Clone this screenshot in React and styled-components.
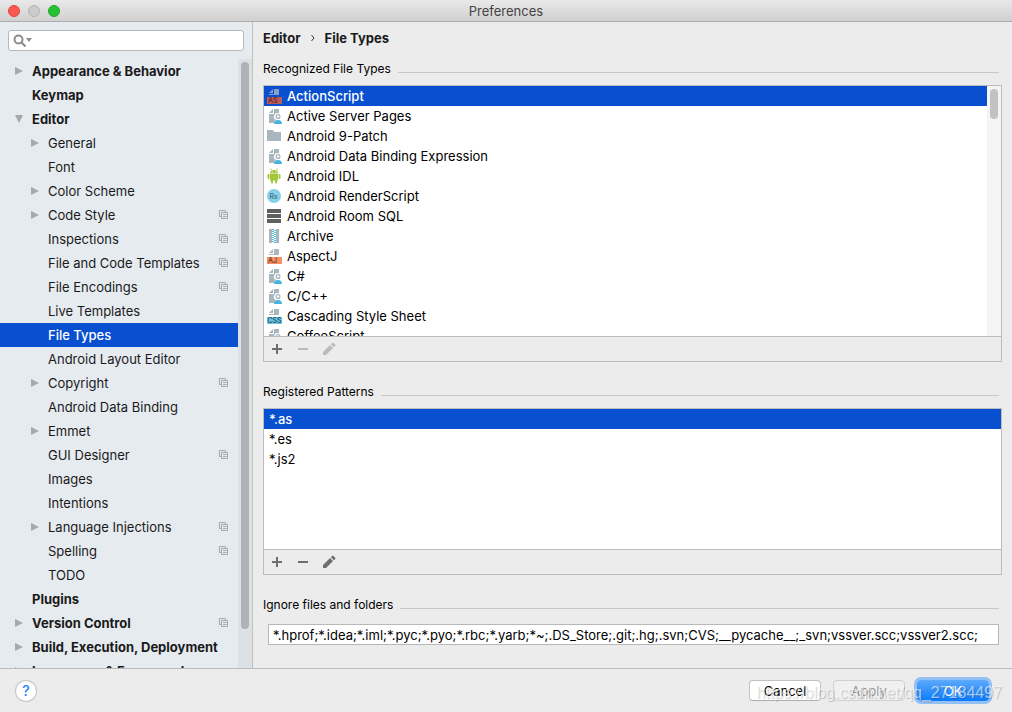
import React, { useState } from "react";
import styled, { createGlobalStyle, css } from "styled-components";

const TREE = [
  { label: "Appearance & Behavior", level: 0, arrow: "closed" },
  { label: "Keymap", level: 0 },
  { label: "Editor", level: 0, arrow: "open" },
  { label: "General", level: 1, arrow: "closed" },
  { label: "Font", level: 1 },
  { label: "Color Scheme", level: 1, arrow: "closed" },
  { label: "Code Style", level: 1, arrow: "closed", project: true },
  { label: "Inspections", level: 1, project: true },
  { label: "File and Code Templates", level: 1, project: true },
  { label: "File Encodings", level: 1, project: true },
  { label: "Live Templates", level: 1 },
  { label: "File Types", level: 1 },
  { label: "Android Layout Editor", level: 1 },
  { label: "Copyright", level: 1, arrow: "closed", project: true },
  { label: "Android Data Binding", level: 1 },
  { label: "Emmet", level: 1, arrow: "closed" },
  { label: "GUI Designer", level: 1, project: true },
  { label: "Images", level: 1 },
  { label: "Intentions", level: 1 },
  { label: "Language Injections", level: 1, arrow: "closed", project: true },
  { label: "Spelling", level: 1, project: true },
  { label: "TODO", level: 1 },
  { label: "Plugins", level: 0 },
  { label: "Version Control", level: 0, arrow: "closed", project: true },
  { label: "Build, Execution, Deployment", level: 0, arrow: "closed" },
  { label: "Languages & Frameworks", level: 0, arrow: "closed" },
];

const FILE_TYPES = [
  { label: "ActionScript", icon: "as" },
  { label: "Active Server Pages", icon: "user" },
  { label: "Android 9-Patch", icon: "folder" },
  { label: "Android Data Binding Expression", icon: "user" },
  { label: "Android IDL", icon: "android" },
  { label: "Android RenderScript", icon: "rs" },
  { label: "Android Room SQL", icon: "sql" },
  { label: "Archive", icon: "archive" },
  { label: "AspectJ", icon: "aj" },
  { label: "C#", icon: "user" },
  { label: "C/C++", icon: "user" },
  { label: "Cascading Style Sheet", icon: "css" },
  { label: "CoffeeScript", icon: "user" },
];

const PATTERNS = ["*.as", "*.es", "*.js2"];

const BADGES = {
  as: { text: "AS", fill: "#b85c56", color: "#5c2330", page: "#86a0cc" },
  aj: { text: "AJ", fill: "#f68f64", color: "#6b3420", page: "#aab6bd" },
  css: { text: "CSS", fill: "#6cc6e6", color: "#1f4a5c", page: "#aab6bd" },
};

const FileIcon = ({ type }) => {
  const badge = BADGES[type];
  return (
    <Icon viewBox="0 0 16 16" aria-hidden="true">
      {badge && (
        <>
          <path d="M7 1 3 5h4zM8 1v5H3v1h10V1z" fill={badge.page} />
          <path d="M1 9h15v7H1z" fill={badge.fill} />
          <BadgeText x={badge.text.length > 2 ? 1.4 : 2} y="15" fill={badge.color}>
            {badge.text}
          </BadgeText>
        </>
      )}
      {type === "user" && (
        <>
          <path d="M7 1 3 5h4zM8 1v5H3v9h5.500c.2-1.400.8-2.300 1.700-2.900A3.300 3.300 0 0 1 13 5.300V1z" fill="#aab6bd" />
          <circle cx="12" cy="8.500" r="1.900" fill="#fff" stroke="#aab6bd" strokeWidth="1.300" />
          <path d="M8 16c0-2.600 1.600-4 4-4s4 1.400 4 4z" fill="#44b4dd" />
        </>
      )}
      {type === "folder" && <path d="M1 2h6l1.500 2H15v9H1z" fill="#aab6bd" />}
      {type === "android" && (
        <g fill="#a4c639">
          <path d="M4 5.500C4 3.500 5.500 2 8 2s4 1.500 4 3.500z" />
          <path d="M4.600.6 6 2.600M11.400.6 10 2.600" stroke="#a4c639" />
          <path d="M4 6h8v6.500H4z" />
          <rect x="1.500" y="6" width="2" height="5" rx="1" />
          <rect x="12.500" y="6" width="2" height="5" rx="1" />
          <rect x="5" y="11" width="2" height="4.500" rx="1" />
          <rect x="9" y="11" width="2" height="4.500" rx="1" />
          <path d="M5.700 3.500h1v1h-1zM9.300 3.500h1v1h-1z" fill="#fff" />
        </g>
      )}
      {type === "rs" && (
        <>
          <circle cx="8" cy="8" r="7" fill="#86d1e8" />
          <BadgeText x="3.500" y="11" fill="#3c6f80">
            Rs
          </BadgeText>
        </>
      )}
      {type === "sql" && <path d="M1 1h14v4H1zM1 6h14v4H1zM1 11h14v4H1z" fill="#5f5f5f" />}
      {type === "archive" && (
        <>
          <path d="M3 1h3v14H3zM10 1h3v14h-3z" fill="#aab6bd" />
          <path d="M7 1v14" stroke="#53b9df" strokeWidth="2" strokeDasharray="1 1" />
          <path d="M9 2v13" stroke="#53b9df" strokeWidth="2" strokeDasharray="1 1" />
        </>
      )}
    </Icon>
  );
};

const ProjectIcon = () => (
  <SmallIcon viewBox="0 0 10 10" aria-label="Project level setting">
    <path d="M2.500 6.500h-2v-6h6v2" fill="none" stroke="#9fabb3" />
    <path d="M2.500 2.500h6v6h-6zM4 4.500h3.500M4 6.500h3.500" fill="none" stroke="#9fabb3" />
  </SmallIcon>
);

const Toolbar = ({ name, locked }) => (
  <ToolbarRow>
    <ToolButton aria-label={`Add ${name}`}>
      <Icon viewBox="0 0 16 16">
        <path d="M7 3h2v4h4v2H9v4H7V9H3V7h4z" />
      </Icon>
    </ToolButton>
    <ToolButton aria-label={`Remove ${name}`} disabled={locked}>
      <Icon viewBox="0 0 16 16">
        <path d="M3 7h10v2H3z" />
      </Icon>
    </ToolButton>
    <ToolButton aria-label={`Edit ${name}`} disabled={locked}>
      <Icon viewBox="0 0 16 16">
        <path d="M2 11v3h3l7-7-3-3zM9.900 3.200l3 3 1.300-1.300a.8.8 0 0 0 0-1.200l-1.800-1.800a.8.8 0 0 0-1.200 0z" />
      </Icon>
    </ToolButton>
  </ToolbarRow>
);

const App = () => {
  const [page, setPage] = useState("File Types");
  const [fileType, setFileType] = useState("ActionScript");
  const [pattern, setPattern] = useState("*.as");
  const [query, setQuery] = useState("");
  const [ignored, setIgnored] = useState(
    "*.hprof;*.idea;*.iml;*.pyc;*.pyo;*.rbc;*.yarb;*~;.DS_Store;.git;.hg;.svn;CVS;__pycache__;_svn;vssver.scc;vssver2.scc;"
  );

  return (
    <Window>
      <GlobalStyle />
      <TitleBar>
        <Lights>
          <Light $fill="#fc5650" $edge="#e2453f" />
          <Light $fill="#cbcbcb" $edge="#b4b4b4" />
          <Light $fill="#28c132" $edge="#1ea929" />
        </Lights>
        <Title>Preferences</Title>
      </TitleBar>

      <Body>
        <Sidebar>
          <SearchBox>
            <SearchIcon viewBox="0 0 20 14" aria-hidden="true">
              <circle cx="5.500" cy="5.500" r="4" fill="none" stroke="#8c8c8c" strokeWidth="2" />
              <path d="m8.500 8.500 4 4" stroke="#8c8c8c" strokeWidth="2.200" />
              <path d="M13 4h6l-3 4z" fill="#8c8c8c" />
            </SearchIcon>
            <SearchInput
              aria-label="Search settings"
              value={query}
              onChange={(e) => setQuery(e.target.value)}
            />
          </SearchBox>
          <TreeArea>
            <Tree>
              {TREE.map((item) => (
                <li key={item.label}>
                  <TreeItem
                    $level={item.level}
                    $selected={item.label === page}
                    onClick={() => setPage(item.label)}
                  >
                    <Arrow viewBox="0 0 8 8" aria-hidden="true">
                      {item.arrow === "closed" && <path d="M0 0v8l8-4z" />}
                      {item.arrow === "open" && <path d="M0 0h8L4 8z" />}
                    </Arrow>
                    <TreeLabel>{item.label}</TreeLabel>
                    {item.project && <ProjectIcon />}
                  </TreeItem>
                </li>
              ))}
            </Tree>
            <TreeScroll>
              <TreeThumb />
            </TreeScroll>
          </TreeArea>
        </Sidebar>

        <Content>
          <Breadcrumb>
            <span>Editor</span>
            <Chevron viewBox="0 0 6 8" aria-hidden="true">
              <path d="m1.500 1 2.500 3-2.500 3" />
            </Chevron>
            <span>File Types</span>
          </Breadcrumb>

          <SectionTitle>
            Recognized File Types
            <Rule />
          </SectionTitle>
          <Panel $grow>
            <ListArea>
              <List>
                {FILE_TYPES.map((item) => (
                  <li key={item.label}>
                    <ListItem
                      $selected={item.label === fileType}
                      onClick={() => setFileType(item.label)}
                    >
                      <FileIcon type={item.icon} />
                      {item.label}
                    </ListItem>
                  </li>
                ))}
              </List>
              <ListScroll>
                <ListThumb />
              </ListScroll>
            </ListArea>
            <Toolbar name="file type" locked />
          </Panel>

          <SectionTitle>
            Registered Patterns
            <Rule />
          </SectionTitle>
          <Panel>
            <PatternList>
              {PATTERNS.map((item) => (
                <li key={item}>
                  <ListItem
                    $plain
                    $selected={item === pattern}
                    onClick={() => setPattern(item)}
                  >
                    {item}
                  </ListItem>
                </li>
              ))}
            </PatternList>
            <Toolbar name="pattern" />
          </Panel>

          <SectionTitle as="label" htmlFor="ignored">
            Ignore files and folders
            <Rule />
          </SectionTitle>
          <IgnoreInput
            id="ignored"
            value={ignored}
            onChange={(e) => setIgnored(e.target.value)}
          />
        </Content>
      </Body>

      <Footer>
        <HelpButton aria-label="Help">?</HelpButton>
        <Buttons>
          <Button>Cancel</Button>
          <Button disabled>Apply</Button>
          <PrimaryButton>OK</PrimaryButton>
        </Buttons>
        <Watermark>https://blog.csdn.net/qq_27184497</Watermark>
      </Footer>
    </Window>
  );
};

export default App;

// Styled components
const GlobalStyle = createGlobalStyle`
  * {
    box-sizing: border-box;
  }
  body {
    margin: 0;
    background: #ececec;
    color: #000;
    font-family: Inter, "Liberation Sans", sans-serif;
    font-size: 13px;
  }
  button, input {
    font: inherit;
    color: inherit;
  }
  ul {
    list-style: none;
    margin: 0;
    padding: 0;
  }
`;

const Window = styled.div`
  display: flex;
  flex-direction: column;
  height: 100vh;
  background: #ececec;
`;

const TitleBar = styled.header`
  display: grid;
  grid-template-columns: 1fr auto 1fr;
  align-items: center;
  flex-shrink: 0;
  height: 22px;
  padding: 0 8px;
  background: linear-gradient(#e9e9e9, #d0d0d0);
  border-bottom: 1px solid #aeaeae;
`;

const Lights = styled.div`
  display: flex;
  gap: 8px;
`;

const Light = styled.span`
  width: 12px;
  height: 12px;
  border-radius: 50%;
  background: ${(p) => p.$fill};
  border: 1px solid ${(p) => p.$edge};
`;

const Title = styled.h1`
  margin: 0;
  font-size: 13px;
  font-weight: 400;
  color: #444;
`;

const Body = styled.div`
  display: flex;
  flex: 1;
  min-height: 0;
`;

const Sidebar = styled.nav`
  display: flex;
  flex-direction: column;
  flex-shrink: 0;
  width: 253px;
  background: #e6ebf0;
  border-right: 1px solid #bfc1c4;
`;

const SearchBox = styled.div`
  display: flex;
  align-items: center;
  flex-shrink: 0;
  height: 21px;
  margin: 8px;
  padding: 0 4px;
  background: #fff;
  border: 1px solid #b5b8bb;
  border-radius: 3px;
`;

const SearchIcon = styled.svg`
  width: 20px;
  height: 14px;
`;

const SearchInput = styled.input`
  flex: 1;
  min-width: 0;
  padding: 0;
  border: 0;
  outline: 0;
  background: none;
`;

const TreeArea = styled.div`
  display: flex;
  flex: 1;
  min-height: 0;
`;

const Tree = styled.ul`
  flex: 1;
  min-width: 0;
  overflow: hidden;
`;

const TreeItem = styled.button`
  display: flex;
  align-items: center;
  gap: 9px;
  width: 100%;
  height: 24px;
  padding: 0 9px 1px ${(p) => (p.$level ? 31 : 15)}px;
  border: 0;
  text-align: left;
  background: none;
  color: #1a1a1a;
  font-weight: ${(p) => (p.$level ? 400 : 700)};
  ${(p) =>
    p.$selected &&
    css`
      background: #0850d0;
      color: #fff;
      font-weight: 500;
    `}
`;

const Arrow = styled.svg`
  flex-shrink: 0;
  width: 8px;
  height: 8px;
  fill: #a8a8a8;
`;

const TreeLabel = styled.span`
  flex: 1;
  white-space: nowrap;
`;

const SmallIcon = styled.svg`
  flex-shrink: 0;
  width: 10px;
  height: 10px;
`;

const TreeScroll = styled.div`
  width: 14px;
  padding: 3px;
  background: #dce1e6;
`;

const TreeThumb = styled.div`
  width: 8px;
  height: 94%;
  border-radius: 4px;
  background: #afb2b7;
`;

const Content = styled.main`
  display: flex;
  flex-direction: column;
  flex: 1;
  min-width: 0;
  padding: 8px 10px 23px;
`;

const Breadcrumb = styled.div`
  display: flex;
  align-items: center;
  gap: 9px;
  height: 16px;
  font-weight: 700;
  color: #1a1a1a;
`;

const Chevron = styled.svg`
  width: 6px;
  height: 8px;
  fill: none;
  stroke: #333;
`;

const SectionTitle = styled.h2`
  display: flex;
  align-items: baseline;
  gap: 7px;
  flex-shrink: 0;
  margin: 22px 3px 8px 0;
  font-size: 12px;
  font-weight: 400;
  line-height: 16px;

  ${Breadcrumb} + & {
    margin-top: 15px;
  }
`;

const Rule = styled.span`
  flex: 1;
  height: 1px;
  background: #c8c8c8;
`;

const Panel = styled.div`
  display: flex;
  flex-direction: column;
  flex: ${(p) => (p.$grow ? 1 : "none")};
  min-height: 0;
  border: 1px solid #bcbcbc;
  background: #fff;
`;

const ListArea = styled.div`
  display: flex;
  flex: 1;
  min-height: 0;
`;

const List = styled.ul`
  flex: 1;
  overflow: hidden;
`;

const PatternList = styled.ul`
  height: 140px;
  overflow: hidden;
`;

const ListItem = styled.button`
  display: flex;
  align-items: center;
  gap: 5px;
  width: 100%;
  height: 20px;
  padding: 0 ${(p) => (p.$plain ? 5 : 2)}px;
  border: 0;
  text-align: left;
  background: ${(p) => (p.$selected ? "#0850d0" : "none")};
  color: ${(p) => (p.$selected ? "#fff" : "#000")};
  font-weight: ${(p) => (p.$selected ? 500 : 400)};
`;

const ListScroll = styled.div`
  width: 14px;
  padding: 3px;
  background: #f5f5f5;
`;

const ListThumb = styled.div`
  width: 8px;
  height: 30px;
  border-radius: 4px;
  background: #c2c2c2;
`;

const Icon = styled.svg`
  display: block;
  flex-shrink: 0;
  width: 16px;
  height: 16px;
`;

const BadgeText = styled.text`
  font-size: 7px;
  font-weight: 500;
`;

const ToolbarRow = styled.div`
  display: flex;
  align-items: center;
  gap: 10px;
  flex-shrink: 0;
  height: 25px;
  padding: 0 5px;
  border-top: 1px solid #bcbcbc;
  background: #ececec;
`;

const ToolButton = styled.button`
  padding: 0;
  border: 0;
  background: none;
  fill: #6e6e6e;
  &:disabled {
    fill: #bababa;
  }
`;

const IgnoreInput = styled.input`
  flex-shrink: 0;
  height: 21px;
  margin: 3px 3px 0 5px;
  padding: 0 4px;
  border: 1px solid #b8b8b8;
  outline: 0;
  background: #fff;
`;

const Footer = styled.footer`
  position: relative;
  display: flex;
  align-items: center;
  justify-content: space-between;
  flex-shrink: 0;
  height: 44px;
  padding: 0 23px 0 16px;
  border-top: 1px solid #bcbcbc;
`;

const HelpButton = styled.button`
  width: 20px;
  height: 20px;
  padding: 0;
  border: 0;
  border-radius: 50%;
  background: #fff;
  box-shadow: 0 0 1px 1px #c4c4c4;
  color: #1a82f7;
  font-size: 14px;
  font-weight: 500;
  line-height: 20px;
`;

const Buttons = styled.div`
  display: flex;
  gap: 12px;
`;

const Button = styled.button`
  width: 72px;
  height: 21px;
  padding: 0;
  border: 1px solid #c2c2c2;
  border-bottom-color: #adadad;
  border-radius: 4px;
  background: #fff;
  &:disabled {
    background: #f0f0f0;
    border-color: #cfcfcf;
    color: #999;
  }
`;

const PrimaryButton = styled(Button)`
  border: 0;
  background: linear-gradient(#5caafb, #0a7bff);
  box-shadow: 0 0 0 3px #93c0f5;
  color: #fff;
`;

const Watermark = styled.span`
  position: absolute;
  right: 10px;
  bottom: 9px;
  pointer-events: none;
  font-family: "Liberation Sans", sans-serif;
  font-size: 16px;
  line-height: 20px;
  color: rgba(255, 255, 255, 0.6);
  text-shadow: 1px 1px 1px rgba(0, 0, 0, 0.2);
`;
